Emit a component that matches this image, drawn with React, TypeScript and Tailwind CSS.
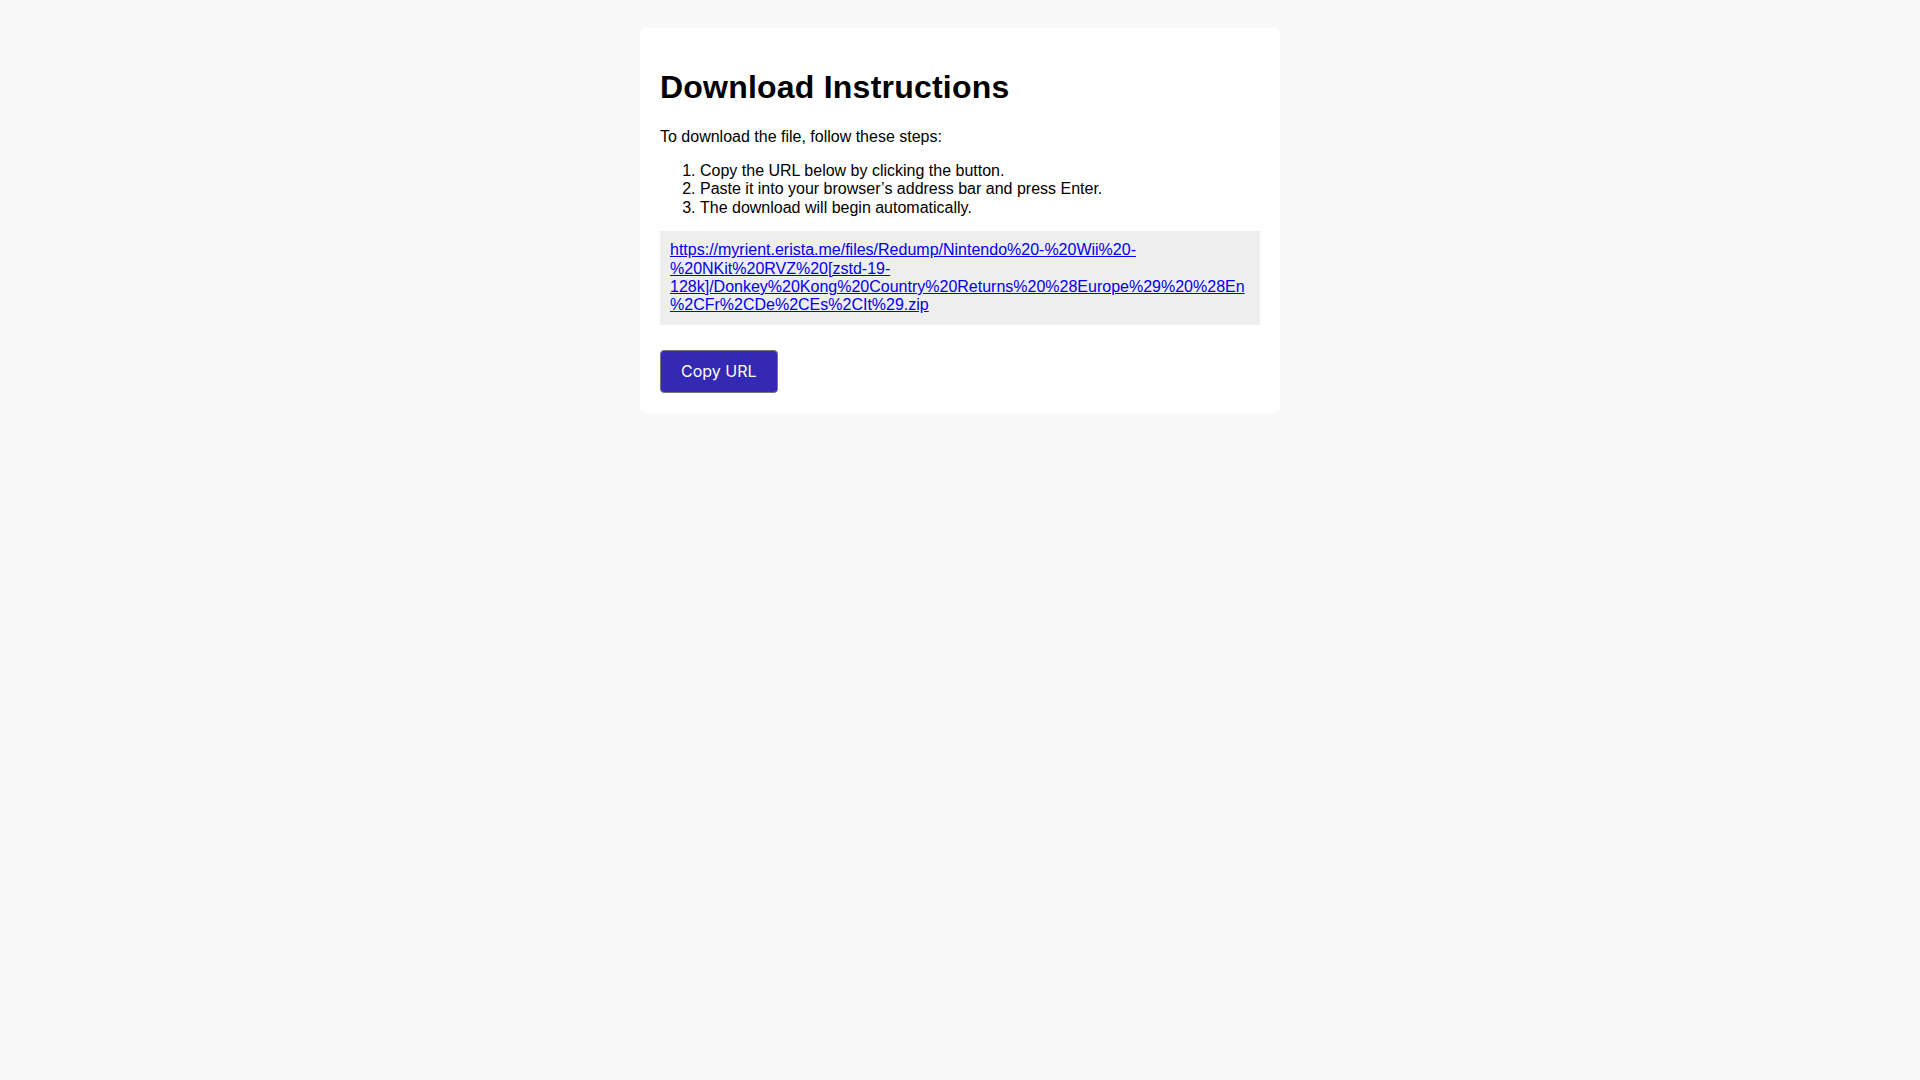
const url =
  "https://myrient.erista.me/files/Redump/Nintendo%20-%20Wii%20-%20NKit%20RVZ%20[zstd-19-128k]/Donkey%20Kong%20Country%20Returns%20%28Europe%29%20%28En%2CFr%2CDe%2CEs%2CIt%29.zip";

const steps = [
  "Copy the URL below by clicking the button.",
  "Paste it into your browser\u2019s address bar and press Enter.",
  "The download will begin automatically.",
];

export default function App() {
  return (
    <div className="min-h-screen bg-[#f9f9f9] pt-[28px] font-['Liberation_Sans',Arial,sans-serif] text-[16px] leading-[18.4px] text-black">
      <div className="mx-auto w-[640px] rounded-lg bg-white p-5">
        <h1 className="mt-[21.4px] mb-[21.4px] text-[32px] leading-[36.8px] font-bold tracking-[0.22px]">
          Download Instructions
        </h1>
        <p className="mb-4">To download the file, follow these steps:</p>
        <ol className="mb-[14px] list-decimal pl-10">
          {steps.map((s) => (
            <li key={s}>{s}</li>
          ))}
        </ol>
        <div className="bg-[#eeeeee] p-[10px] break-words">
          <a href="#" className="text-[#0000ee] underline">
            {url}
          </a>
        </div>
        <button className="mt-[25px] block rounded border border-[#767676] bg-[#3329b2] px-5 py-[10px] font-['Inter',sans-serif] text-[16px] leading-[21px] text-white">
          Copy URL
        </button>
      </div>
    </div>
  );
}
